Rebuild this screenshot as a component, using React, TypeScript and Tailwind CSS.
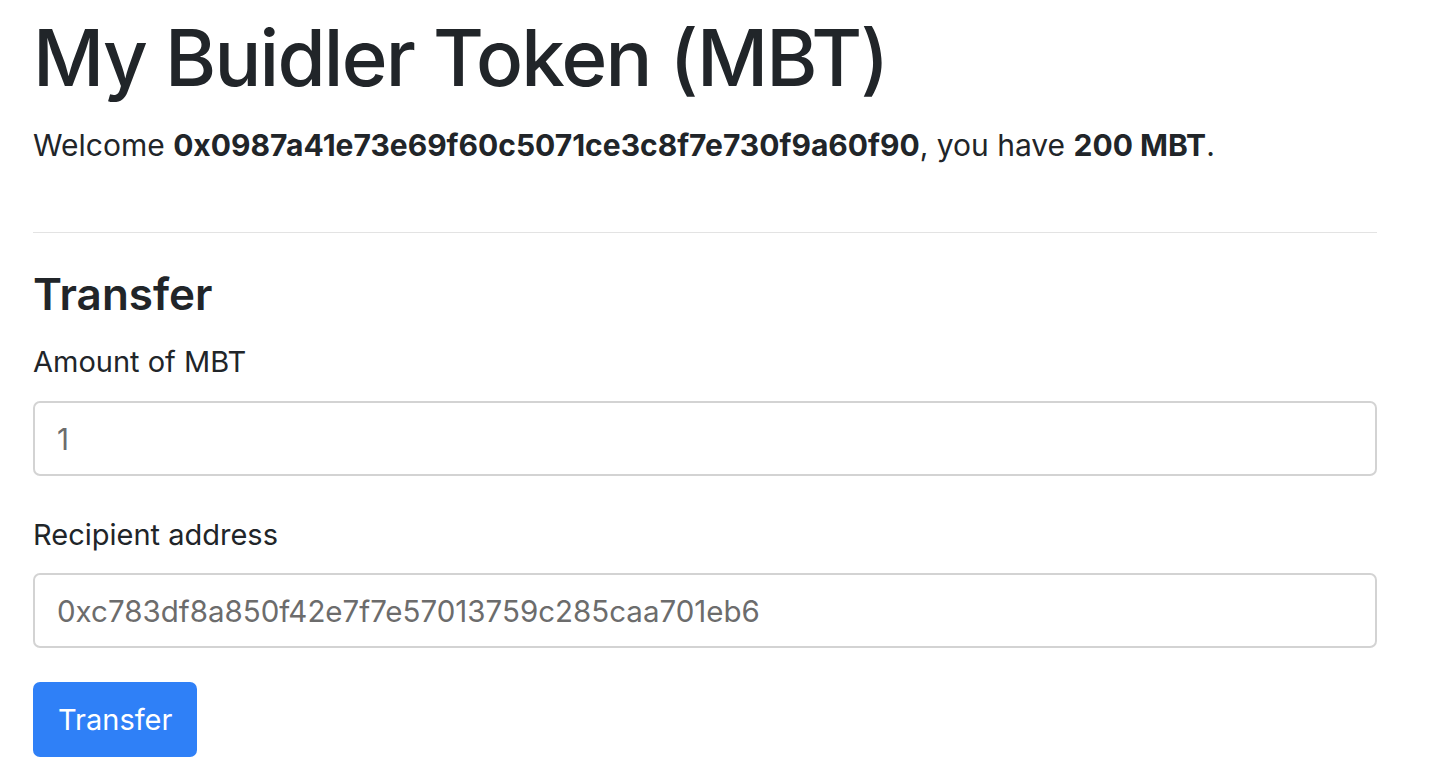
export default function App() {
  const font = { fontFamily: 'Inter, "Liberation Sans", sans-serif' }

  return (
    <div className="min-h-screen bg-white text-[#212529]" style={font}>
      <div className="pl-[33px] pr-[73px]">
        {/* Header */}
        <h1 className="pt-[10px] text-[78px] leading-[96px] font-medium tracking-[-1.8px]">My Buidler Token (MBT)</h1>
        <p className="mt-[18px] text-[30px] leading-[43px]">
          Welcome <b className="font-bold">0x0987a41e73e69f60c5071ce3c8f7e730f9a60f90</b>, you have{' '}
          <b className="font-bold">200 MBT</b>.
        </p>

        <hr className="mt-[65px] border-t border-[#e3e3e3]" />

        {/* Transfer form */}
        <h3 className="mt-[34px] text-[44px] leading-[55px] font-semibold">Transfer</h3>
        <form className="mt-[18px]" onSubmit={(e) => e.preventDefault()}>
          <div className="mb-[37px]">
            <label className="block text-[29px] leading-[43px]">Amount of MBT</label>
            <input
              type="number"
              defaultValue="1"
              className="mt-[18px] block h-[75px] w-full rounded-[7px] border-2 border-[#d3d3d3] px-[22px] text-[29.5px] text-[#6c6c6c] outline-none"
            />
          </div>
          <div className="mb-[34px]">
            <label className="block text-[29px] leading-[43px]">Recipient address</label>
            <input
              type="text"
              defaultValue="0xc783df8a850f42e7f7e57013759c285caa701eb6"
              className="mt-[17px] block h-[75px] w-full rounded-[7px] border-2 border-[#d3d3d3] px-[22px] text-[29.5px] text-[#6c6c6c] outline-none"
            />
          </div>
          <button
            type="submit"
            className="h-[75px] rounded-[7px] bg-[#2f80f7] px-[25px] text-[29px] text-white"
          >
            Transfer
          </button>
        </form>
      </div>
    </div>
  )
}
